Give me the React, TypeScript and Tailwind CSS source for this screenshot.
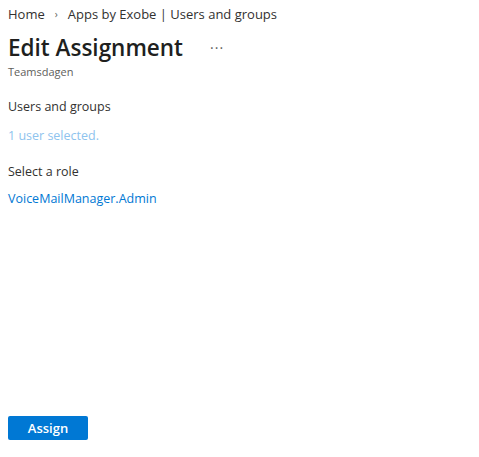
export default function App() {
  return (
    <div
      className="h-[457px] w-full bg-white flex flex-col pl-[8px] pb-[17px] text-[#323130]"
      style={{ fontFamily: '"Open Sans", "Noto Sans", sans-serif' }}
    >
      {/* breadcrumb */}
      <nav className="mt-[4px] flex items-center h-[20px] text-[13px] leading-[20px]">
        <span>Home</span>
        <span className="mx-[10px] text-[10px] text-[#605e5c]">›</span>
        <span>Apps by Exobe | Users and groups</span>
      </nav>

      <div className="mt-[8px] flex items-center h-[32px]">
        <h1 className="text-[22.5px] leading-[32px] font-semibold text-[#201f1e]">Edit Assignment</h1>
        <button className="ml-[27px] text-[#605e5c] text-[14px] leading-none tracking-[1px]">···</button>
      </div>
      <div className="text-[11px] leading-[16px] text-[#605e5c]">Teamsdagen</div>

      <div className="mt-[17px] text-[12.5px] leading-[20px]">Users and groups</div>
      <div className="mt-[9px] text-[12.5px] leading-[20px] text-[#8ec3ee]">1 user selected.</div>

      <div className="mt-[16px] text-[12.5px] leading-[20px]">Select a role</div>
      <a className="mt-[7px] text-[12.5px] leading-[20px] text-[#0078d4] self-start">VoiceMailManager.Admin</a>

      <button className="mt-auto w-[80px] h-[24px] rounded-[2px] bg-[#0078d4] text-white text-[13px] font-semibold leading-[24px]">
        Assign
      </button>
    </div>
  );
}
